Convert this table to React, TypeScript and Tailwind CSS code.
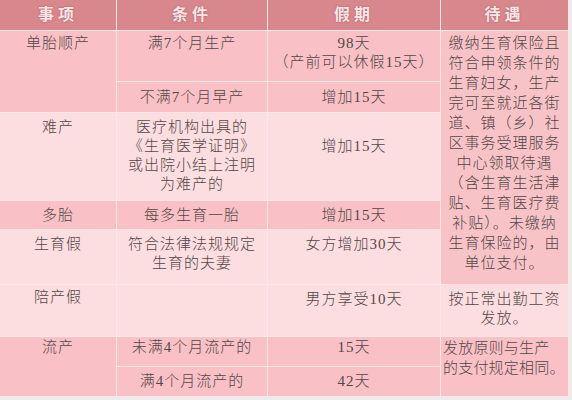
import React from "react";

const head =
  "flex items-center justify-center bg-[#d8878c] text-[16px] font-bold tracking-[4px] text-[#fbe6e8] [text-shadow:0_0_2px_#a9585e]";
const dark = "bg-[#f9c1c5]";
const light = "bg-[#fcdde0]";
const mid = "bg-[#f8c3c7]";

function Lines({ lines }: { lines: string[] }) {
  return (
    <>
      {lines.map((l, i) => (
        <div key={i} className="whitespace-nowrap">
          {l}
        </div>
      ))}
    </>
  );
}

export default function App() {
  return (
    <div className="w-[572px] h-[400px] bg-[#f1eaea] font-['Liberation_Serif','Noto_Sans_CJK_SC',serif] font-light text-[15px] text-[#524748] tracking-[1px]">
      <div className="grid w-[568px] grid-cols-[116px_150px_172px_127px] grid-rows-[30px_50px_30px_87px_28px_54px_51px_29px_29px] gap-px bg-[#fce7e9]">
        {/* header */}
        <div className={`${head} col-start-1 row-start-1`}>事项</div>
        <div className={`${head} col-start-2 row-start-1`}>条件</div>
        <div className={`${head} col-start-3 row-start-1`}>假期</div>
        <div className={`${head} col-start-4 row-start-1`}>待遇</div>

        {/* column 1 */}
        <div className={`${dark} col-start-1 row-start-2 row-span-2 pt-[3px] text-center leading-[19px]`}>单胎顺产</div>
        <div className={`${light} col-start-1 row-start-4 pt-[5px] text-center leading-[19px]`}>难产</div>
        <div className={`${dark} col-start-1 row-start-5 flex items-center justify-center leading-[19px]`}>多胎</div>
        <div className={`${light} col-start-1 row-start-6 pt-[5px] text-center leading-[19px]`}>生育假</div>
        <div className={`${light} col-start-1 row-start-7 pt-[3px] text-center leading-[19px]`}>陪产假</div>
        <div className={`${dark} col-start-1 row-start-8 row-span-2 pt-[1px] text-center leading-[19px]`}>流产</div>

        {/* column 2 */}
        <div className={`${dark} col-start-2 row-start-2 pt-[3px] text-center leading-[19px]`}>满7个月生产</div>
        <div className={`${dark} col-start-2 row-start-3 flex items-center justify-center leading-[19px]`}>不满7个月早产</div>
        <div className={`${light} col-start-2 row-start-4 pt-[5px] text-center leading-[19px]`}>
          <Lines lines={["医疗机构出具的", "《生育医学证明》", "或出院小结上注明", "为难产的"]} />
        </div>
        <div className={`${dark} col-start-2 row-start-5 flex items-center justify-center leading-[19px]`}>每多生育一胎</div>
        <div className={`${light} col-start-2 row-start-6 pt-[5px] text-center leading-[19px]`}>
          <Lines lines={["符合法律法规规定", "生育的夫妻"]} />
        </div>
        <div className={`${light} col-start-2 row-start-7`} />
        <div className={`${dark} col-start-2 row-start-8 pt-[1px] text-center leading-[19px]`}>未满4个月流产的</div>
        <div className={`${dark} col-start-2 row-start-9 flex items-center justify-center leading-[19px]`}>满4个月流产的</div>

        {/* column 3 */}
        <div className={`${dark} col-start-3 row-start-2 pt-[3px] text-center leading-[19px]`}>
          <Lines lines={["98天", "（产前可以休假15天）"]} />
        </div>
        <div className={`${dark} col-start-3 row-start-3 flex items-center justify-center leading-[19px]`}>增加15天</div>
        <div className={`${light} col-start-3 row-start-4 pt-[24px] text-center leading-[19px]`}>增加15天</div>
        <div className={`${dark} col-start-3 row-start-5 flex items-center justify-center leading-[19px]`}>增加15天</div>
        <div className={`${light} col-start-3 row-start-6 pt-[5px] text-center leading-[19px]`}>女方增加30天</div>
        <div className={`${light} col-start-3 row-start-7 pt-[5px] text-center leading-[19px]`}>男方享受10天</div>
        <div className={`${dark} col-start-3 row-start-8 pt-[1px] text-center leading-[19px]`}>15天</div>
        <div className={`${dark} col-start-3 row-start-9 flex items-center justify-center leading-[19px]`}>42天</div>

        {/* column 4 */}
        <div className={`${mid} col-start-4 row-start-2 row-span-5 pt-[2px] text-center leading-[20px]`}>
          <Lines
            lines={[
              "缴纳生育保险且",
              "符合申领条件的",
              "生育妇女，生产",
              "完可至就近各街",
              "道、镇（乡）社",
              "区事务受理服务",
              "中心领取待遇",
              "（含生育生活津",
              "贴、生育医疗费",
              "补贴）。未缴纳",
              "生育保险的，由",
              "单位支付。",
            ]}
          />
        </div>
        <div className={`${light} col-start-4 row-start-7 pt-[5px] text-center leading-[19px]`}>
          <Lines lines={["按正常出勤工资", "发放。"]} />
        </div>
        <div className={`${dark} col-start-4 row-start-8 row-span-2 pl-[2px] pt-[1px] text-left leading-[20px] tracking-[0.2px]`}>
          <Lines lines={["发放原则与生产", "的支付规定相同。"]} />
        </div>
      </div>
    </div>
  );
}
